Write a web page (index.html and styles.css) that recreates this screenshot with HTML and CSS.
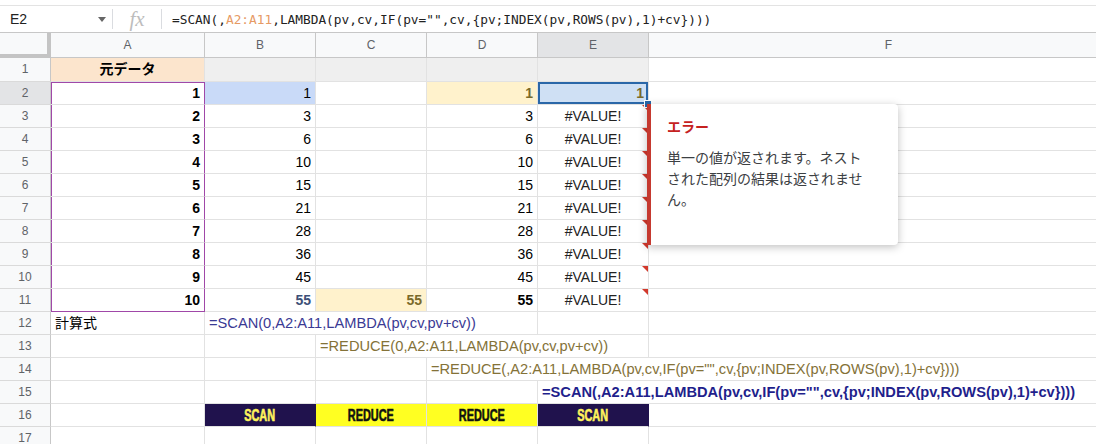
FILE: index.html
```html
<!DOCTYPE html>
<html lang="ja">
<head>
  <meta charset="UTF-8">
  <title>SCAN / REDUCE</title>
  <link rel="stylesheet" href="styles.css">
</head>
<body>

  <!-- 数式バー -->
  <div class="formula-bar">
    <div class="name-box">E2<span class="caret"></span></div>
    <div class="sep"></div>
    <div class="fx">fx</div>
    <div class="sep"></div>
    <div class="formula">=SCAN(,<span class="ref">A2:A11</span>,LAMBDA(pv,cv,IF(pv="",cv,{pv;INDEX(pv,ROWS(pv),1)+cv})))</div>
  </div>

  <!-- シート本体 -->
  <div class="sheet">
    <div class="corner"></div>
    <div class="h">A</div><div class="h">B</div><div class="h">C</div><div class="h">D</div><div class="h sel">E</div><div class="h">F</div>

    <div class="rh">1</div>
    <div class="c head-src">元データ</div><div class="c gray"></div><div class="c gray"></div><div class="c gray"></div><div class="c gray"></div><div class="c"></div>

    <div class="rh sel">2</div>
    <div class="c n b pa pa-top">1</div><div class="c n blue-bg">1</div><div class="c"></div><div class="c n b olive yel-bg">1</div><div class="c n b olive active">1</div><div class="c"></div>

    <div class="rh">3</div>
    <div class="c n b pa">2</div><div class="c n">3</div><div class="c"></div><div class="c n">3</div><div class="c mid err">#VALUE!</div><div class="c"></div>
    <div class="rh">4</div>
    <div class="c n b pa">3</div><div class="c n">6</div><div class="c"></div><div class="c n">6</div><div class="c mid err">#VALUE!</div><div class="c"></div>
    <div class="rh">5</div>
    <div class="c n b pa">4</div><div class="c n">10</div><div class="c"></div><div class="c n">10</div><div class="c mid err">#VALUE!</div><div class="c"></div>
    <div class="rh">6</div>
    <div class="c n b pa">5</div><div class="c n">15</div><div class="c"></div><div class="c n">15</div><div class="c mid err">#VALUE!</div><div class="c"></div>
    <div class="rh">7</div>
    <div class="c n b pa">6</div><div class="c n">21</div><div class="c"></div><div class="c n">21</div><div class="c mid err">#VALUE!</div><div class="c"></div>
    <div class="rh">8</div>
    <div class="c n b pa">7</div><div class="c n">28</div><div class="c"></div><div class="c n">28</div><div class="c mid err">#VALUE!</div><div class="c"></div>
    <div class="rh">9</div>
    <div class="c n b pa">8</div><div class="c n">36</div><div class="c"></div><div class="c n">36</div><div class="c mid err">#VALUE!</div><div class="c"></div>
    <div class="rh">10</div>
    <div class="c n b pa">9</div><div class="c n">45</div><div class="c"></div><div class="c n">45</div><div class="c mid err">#VALUE!</div><div class="c"></div>
    <div class="rh">11</div>
    <div class="c n b pa pa-bottom">10</div><div class="c n b steel">55</div><div class="c n b olive yel-bg">55</div><div class="c n b">55</div><div class="c mid err">#VALUE!</div><div class="c"></div>

    <div class="rh">12</div>
    <div class="c">計算式</div>
    <div class="c span3 fx-text f-scan">=SCAN(0,A2:A11,LAMBDA(pv,cv,pv+cv))</div>
    <div class="c"></div><div class="c"></div>

    <div class="rh">13</div>
    <div class="c"></div><div class="c"></div>
    <div class="c span3 fx-text f-reduce">=REDUCE(0,A2:A11,LAMBDA(pv,cv,pv+cv))</div>
    <div class="c"></div>

    <div class="rh">14</div>
    <div class="c"></div><div class="c"></div><div class="c"></div>
    <div class="c span3 fx-text f-reduce">=REDUCE(,A2:A11,LAMBDA(pv,cv,IF(pv="",cv,{pv;INDEX(pv,ROWS(pv),1)+cv})))</div>

    <div class="rh">15</div>
    <div class="c"></div><div class="c"></div><div class="c"></div><div class="c"></div>
    <div class="c span2 fx-text f-scan-b">=SCAN(,A2:A11,LAMBDA(pv,cv,IF(pv="",cv,{pv;INDEX(pv,ROWS(pv),1)+cv})))</div>

    <div class="rh">16</div>
    <div class="c"></div>
    <div class="c tag navy"><span>SCAN</span></div>
    <div class="c tag yellow"><span>REDUCE</span></div>
    <div class="c tag yellow"><span>REDUCE</span></div>
    <div class="c tag navy"><span>SCAN</span></div>
    <div class="c"></div>

    <div class="rh">17</div>
    <div class="c"></div><div class="c"></div><div class="c"></div><div class="c"></div><div class="c"></div><div class="c"></div>
  </div>

  <!-- エラーのポップアップ -->
  <div class="err-note">
    <div class="err-title">エラー</div>
    <p>単一の値が返されます。ネストされた配列の結果は返されません。</p>
  </div>

</body>
</html>
```

FILE: styles.css
```css
/* 基本 */
body {
  margin: 0;
  overflow: hidden;
  background: #fff;
  color: #000;
  font-family: 'Liberation Sans', Arial, 'Noto Sans CJK JP', sans-serif;
}

/* 数式バー */
.formula-bar {
  margin-top: 5px;
  height: 28px;
  box-sizing: border-box;
  border-top: 1px solid #e3e3e3;
  border-bottom: 1px solid #c7c7c7;
  display: flex;
  align-items: center;
}

.name-box {
  width: 112px;
  box-sizing: border-box;
  padding-left: 10px;
  font-size: 14px;
  color: #222;
  display: flex;
  align-items: center;
}

.caret {
  margin-left: auto;
  margin-right: 6px;
  border-left: 4px solid transparent;
  border-right: 4px solid transparent;
  border-top: 5px solid #666;
}

.sep {
  width: 1px;
  height: 20px;
  background: #dadce0;
}

.fx {
  width: 48px;
  text-align: center;
  font-family: 'Liberation Serif', serif;
  font-style: italic;
  font-size: 21px;
  color: #bdbdbd;
  line-height: 20px;
}

.formula {
  padding-left: 10px;
  font-family: 'DejaVu Sans Mono', monospace;
  font-size: 12.8px;
  color: #222;
  white-space: nowrap;
}

.formula .ref {
  color: #e69a64;
}

/* シート */
.sheet {
  display: grid;
  grid-template-columns: 51px 154px 111px 111px 111px 111px 480px;
  grid-template-rows: 25px 24px;
  grid-auto-rows: 23px;
}

.corner {
  background: #f8f9fa;
  border-right: 4px solid #c4c4c4;
  border-bottom: 4px solid #c4c4c4;
}

.h {
  background: #f8f9fa;
  border-right: 1px solid #c7c7c7;
  border-bottom: 1px solid #c7c7c7;
  color: #5f6368;
  font-size: 12px;
  text-align: center;
  line-height: 24px;
}

.rh {
  background: #f8f9fa;
  border-right: 1px solid #c7c7c7;
  border-bottom: 1px solid #dadada;
  color: #5f6368;
  font-size: 12px;
  text-align: center;
  line-height: 22px;
}

.h.sel, .rh.sel {
  background: #e3e4e6;
}

.c {
  position: relative;
  border-right: 1px solid #e2e2e2;
  border-bottom: 1px solid #e2e2e2;
  padding: 0 4px;
  font-size: 14px;
  line-height: 22px;
  white-space: nowrap;
  overflow: hidden;
}

.n { text-align: right; }
.mid { text-align: center; color: #222; }
.b { font-weight: bold; }

.head-src {
  background: #fce5cd;
  font-weight: bold;
  text-align: center;
  line-height: 23px;
}

.gray { background: #efefef; }
.blue-bg { background: #c9daf8; }
.yel-bg { background: #fff2cc; }
.olive { color: #7a6a2a; }
.steel { color: #3d5078; }

/* A2:A11 の枠 */
.pa {
  border-right-color: #a048a8;
  box-shadow: inset 1px 0 0 #a048a8;
}

.pa-top {
  box-shadow: inset 1px 0 0 #a048a8, inset 0 1px 0 #a048a8;
}

.pa-bottom {
  border-bottom-color: #a048a8;
}

/* 選択中のセル */
.active {
  overflow: visible;
  background: #cfe0f4;
  box-shadow: inset 0 0 0 2px #2a67a8;
}

.active::after {
  content: '';
  position: absolute;
  right: -4px;
  bottom: -4px;
  width: 6px;
  height: 6px;
  background: #2a67a8;
  border: 1px solid #fff;
  z-index: 2;
}

/* エラーの三角 */
.err::after {
  content: '';
  position: absolute;
  top: 0;
  right: 0;
  border-top: 6px solid #d2392c;
  border-left: 6px solid transparent;
}

/* 計算式の行 */
.span3 { grid-column: span 3; }
.span2 { grid-column: span 2; }

.fx-text { font-size: 14.65px; }
.f-scan { color: #3a3a94; }
.f-reduce { color: #847238; }
.f-scan-b { color: #1f1f8c; font-weight: bold; }

/* 関数名ラベル */
.tag {
  text-align: center;
  font-weight: bold;
  font-size: 16px;
  line-height: 23px;
  overflow: visible;
}

.tag span {
  display: inline-block;
  transform: scaleX(0.68);
  -webkit-text-stroke: 0.6px currentColor;
}

.navy {
  background: #20124d;
  color: #fff35c;
  border-right-color: #20124d;
}

.yellow {
  background: #ffff22;
  color: #111;
}

/* エラーのポップアップ */
.err-note {
  position: absolute;
  left: 647px;
  top: 104px;
  width: 251px;
  height: 141px;
  box-sizing: border-box;
  background: #fff;
  border-left: 4px solid #c5392f;
  border-radius: 0 4px 4px 0;
  box-shadow: 0 2px 8px rgba(0, 0, 0, 0.25);
  padding: 12px 16px 0 16px;
  font-family: 'Liberation Sans', 'Noto Sans CJK JP', sans-serif;
  z-index: 3;
}

.err-title {
  color: #c5221f;
  font-weight: bold;
  font-size: 14px;
  line-height: 22px;
}

.err-note p {
  margin: 10px 0 0 0;
  width: 206px;
  font-size: 14px;
  line-height: 21px;
  color: #3c4043;
}
```
